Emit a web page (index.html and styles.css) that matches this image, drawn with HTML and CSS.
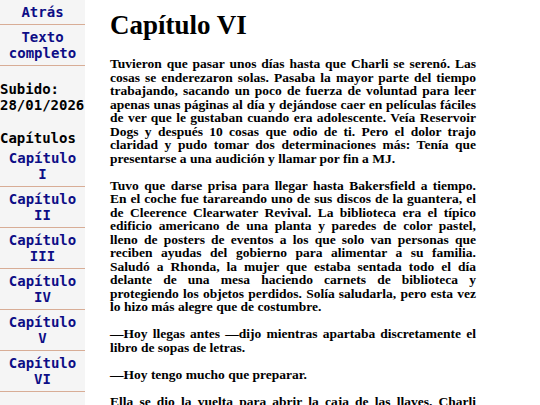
FILE: index.html
```html
<!DOCTYPE html>
<html lang="es">
<head>
<meta charset="utf-8">
<title>Capítulo VI</title>
<link rel="stylesheet" href="styles.css">
</head>
<body>
<nav class="sidebar">
  <a class="nav-link" href="#">Atrás</a>
  <a class="nav-link" href="#">Texto completo</a>
  <p class="meta">Subido:<br>28/01/2026</p>
  <h3 class="chapters-title">Capítulos</h3>
  <a class="nav-link" href="#">Capítulo I</a>
  <a class="nav-link" href="#">Capítulo II</a>
  <a class="nav-link" href="#">Capítulo III</a>
  <a class="nav-link" href="#">Capítulo IV</a>
  <a class="nav-link" href="#">Capítulo V</a>
  <a class="nav-link" href="#">Capítulo VI</a>
</nav>
<main class="content">
  <h1 class="title">Capítulo VI</h1>
  <p>Tuvieron que pasar unos días hasta que Charli se serenó. Las cosas se enderezaron solas. Pasaba la mayor parte del tiempo trabajando, sacando un poco de fuerza de voluntad para leer apenas unas páginas al día y dejándose caer en películas fáciles de ver que le gustaban cuando era adolescente. Veía Reservoir Dogs y después 10 cosas que odio de ti. Pero el dolor trajo claridad y pudo tomar dos determinaciones más: Tenía que presentarse a una audición y llamar por fin a MJ.</p>
  <p>Tuvo que darse prisa para llegar hasta Bakersfield a tiempo. En el coche fue tarareando uno de sus discos de la guantera, el de Cleerence Clearwater Revival. La biblioteca era el típico edificio americano de una planta y paredes de color pastel, lleno de posters de eventos a los que solo van personas que reciben ayudas del gobierno para alimentar a su familia. Saludó a Rhonda, la mujer que estaba sentada todo el día delante de una mesa haciendo carnets de biblioteca y protegiendo los objetos perdidos. Solía saludarla, pero esta vez lo hizo más alegre que de costumbre.</p>
  <p>—Hoy llegas antes —dijo mientras apartaba discretamente el libro de sopas de letras.</p>
  <p>—Hoy tengo mucho que preparar.</p>
  <p>Ella se dio la vuelta para abrir la caja de las llaves. Charli aprovechó para sacar los libros devueltos del buzón y colocarlos en el carrito.</p>
</main>
</body>
</html>
```

FILE: styles.css
```css
html, body {
  margin: 0;
  padding: 0;
  background: #ffffff;
}

.sidebar {
  position: fixed;
  top: 0;
  left: 0;
  bottom: 0;
  width: 85px;
  background: #f5f5f5;
  font-family: "DejaVu Sans Mono", monospace;
  font-weight: bold;
  font-size: 14px;
  line-height: 16px;
  display: flex;
  flex-direction: column;
}

.nav-link {
  display: block;
  text-align: center;
  color: #0d0d86;
  text-decoration: none;
  padding: 4px 3px;
  border-bottom: 1px solid #d8ad96;
}

.meta {
  margin: 15px 0 0;
  color: #000;
}

.chapters-title {
  margin: 17px 0 0;
  font-size: 14px;
  color: #000;
}

.content {
  margin-left: 110px;
  width: 366px;
  font-family: "Liberation Serif", "Times New Roman", serif;
  font-weight: bold;
  font-size: 13.5px;
  line-height: 1;
  color: #000;
  text-align: justify;
}

.title {
  font-size: 27px;
  line-height: 31px;
  margin: 10px 0 16px;
  text-align: left;
}

.content p {
  margin: 0 0 1em;
}
```
